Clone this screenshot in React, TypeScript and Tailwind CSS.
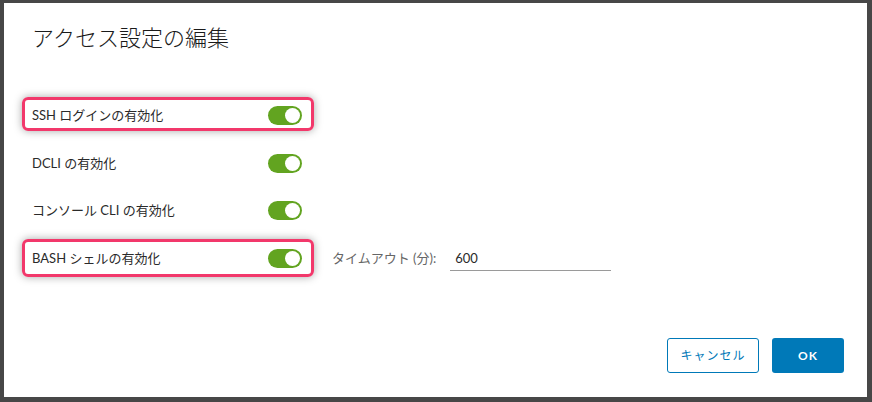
import React from "react";

const font = { fontFamily: 'Lato, "Noto Sans CJK JP", sans-serif' };

function Toggle() {
  return (
    <div className="relative w-[34px] h-[19px] rounded-full bg-[#62a420] shrink-0">
      <div className="absolute right-[2px] top-[2px] w-[15px] h-[15px] rounded-full bg-white" />
    </div>
  );
}

function Row({ label, children }: { label: string; children?: React.ReactNode }) {
  return (
    <div className="flex items-center h-[47.6px]">
      <div className="w-[236px] text-[13px] text-[#2a2a2a]">{label}</div>
      <Toggle />
      {children}
    </div>
  );
}

export default function App() {
  return (
    <div className="w-[872px] h-[402px] bg-[#474747] pt-[3px] pl-[4px] pr-[5px] pb-[5px]" style={font}>
      <div className="relative w-full h-full bg-white flex flex-col pl-[28px] pr-[23px] pt-[21px] pb-[24px]">
        <div className="text-[22px] leading-[28px] font-light text-[#1a1a1a]">アクセス設定の編集</div>
        <div className="mt-[40px] flex flex-col">
          <Row label="SSH ログインの有効化" />
          <Row label="DCLI の有効化" />
          <Row label="コンソール CLI の有効化" />
          <Row label="BASH シェルの有効化">
            <div className="ml-[30px] text-[13px] text-[#666666]">タイムアウト (分):</div>
            <div className="ml-[14px] w-[161px] h-[24px] border-b border-[#9a9a9a] flex items-center pl-[5px] text-[13px] text-[#2a2a2a] mt-[1px]">
              600
            </div>
          </Row>
        </div>
        <div className="mt-auto flex justify-end gap-[13px]">
          <button className="w-[92px] h-[35px] rounded-[3px] border border-[#0079b8] text-[#0079b8] text-[12px] tracking-[1px] bg-white">
            キャンセル
          </button>
          <button className="w-[72px] h-[35px] rounded-[3px] bg-[#0079b8] text-white text-[12px] font-bold tracking-[1px]">
            OK
          </button>
        </div>
        <div className="absolute left-[18px] top-[94px] w-[292px] h-[34px] rounded-[6px] border-[3px] border-[#f2386b] shadow-[0_0_8px_rgba(0,0,0,0.35)]" />
        <div className="absolute left-[18px] top-[236px] w-[292px] h-[38px] rounded-[6px] border-[3px] border-[#f2386b] shadow-[0_0_8px_rgba(0,0,0,0.35)]" />
      </div>
    </div>
  );
}
